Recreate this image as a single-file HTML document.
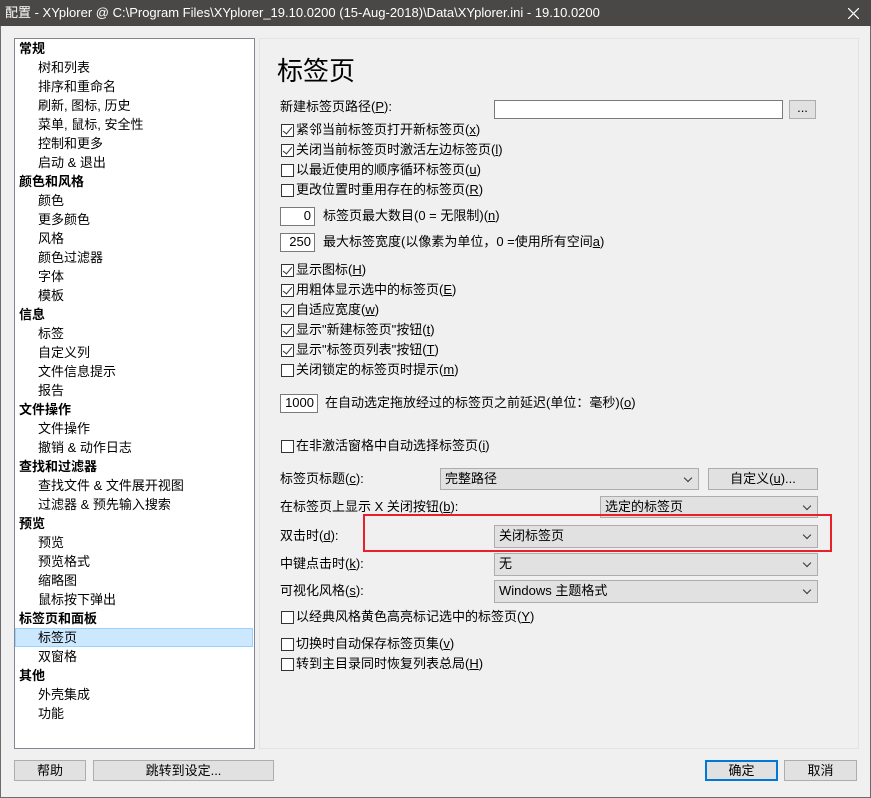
<!DOCTYPE html><html><head><meta charset="utf-8"><style>
*{margin:0;padding:0;box-sizing:border-box}
body{width:871px;height:798px;position:relative;background:#f0f0f0;font-family:"Liberation Sans","Noto Sans CJK SC",sans-serif;font-size:13px;color:#000;overflow:hidden}
.a{position:absolute;white-space:nowrap;line-height:18px}
.tb{position:absolute;left:0;top:0;width:871px;height:26px;background:#4a4846;color:#fff;font-size:13px;line-height:26px;padding-left:5px}
.win{position:absolute;left:0;top:26px;width:871px;height:772px;border:1px solid #6b6b6b;border-top:none}
.tree{position:absolute;left:14px;top:38px;width:241px;height:711px;background:#fff;border:1px solid #828790}
.pane{position:absolute;left:259px;top:38px;width:600px;height:711px;border:1px solid #e3e3e3;background:#f0f0f0}
.h{font-weight:bold;left:19px}
.c{left:38px}
.cb{position:absolute;width:13px;height:13px;border:1px solid #333;background:#fff}
.cb.k::after{content:"";position:absolute;left:3px;top:0px;width:4px;height:8px;border:solid #333;border-width:0 1.3px 1.3px 0;transform:rotate(40deg)}
.box{position:absolute;background:#fff;border:1px solid #7a7a7a;text-align:right;padding-right:3px;line-height:16px}
.cmb{position:absolute;background:#e1e1e1;border:1px solid #adadad;padding-left:4px;line-height:20px}
.cmb::after{content:"";position:absolute;right:7px;top:6px;width:5px;height:5px;border:solid #333;border-width:0 1px 1px 0;transform:rotate(45deg)}
.btn{position:absolute;background:#e1e1e1;border:1px solid #adadad;text-align:center;line-height:19px}
u{text-decoration:underline}
</style></head><body>
<div class="tb">配置 - XYplorer @ C:\Program Files\XYplorer_19.10.0200 (15-Aug-2018)\Data\XYplorer.ini - 19.10.0200<svg style="position:absolute;right:12px;top:8px" width="11" height="11"><path d="M0 0L11 11M11 0L0 11" stroke="#fff" stroke-width="1.2"/></svg></div>
<div class="win"></div>
<div class="tree"></div>
<div style="position:absolute;left:15px;top:628px;width:238px;height:19px;background:#cce8ff;border:1px solid #99d1ff"></div>
<div class="a h" style="top:40px">常规</div>
<div class="a c" style="top:59px">树和列表</div>
<div class="a c" style="top:78px">排序和重命名</div>
<div class="a c" style="top:97px">刷新, 图标, 历史</div>
<div class="a c" style="top:116px">菜单, 鼠标, 安全性</div>
<div class="a c" style="top:135px">控制和更多</div>
<div class="a c" style="top:154px">启动 &amp; 退出</div>
<div class="a h" style="top:173px">颜色和风格</div>
<div class="a c" style="top:192px">颜色</div>
<div class="a c" style="top:211px">更多颜色</div>
<div class="a c" style="top:230px">风格</div>
<div class="a c" style="top:249px">颜色过滤器</div>
<div class="a c" style="top:268px">字体</div>
<div class="a c" style="top:287px">模板</div>
<div class="a h" style="top:306px">信息</div>
<div class="a c" style="top:325px">标签</div>
<div class="a c" style="top:344px">自定义列</div>
<div class="a c" style="top:363px">文件信息提示</div>
<div class="a c" style="top:382px">报告</div>
<div class="a h" style="top:401px">文件操作</div>
<div class="a c" style="top:420px">文件操作</div>
<div class="a c" style="top:439px">撤销 &amp; 动作日志</div>
<div class="a h" style="top:458px">查找和过滤器</div>
<div class="a c" style="top:477px">查找文件 &amp; 文件展开视图</div>
<div class="a c" style="top:496px">过滤器 &amp; 预先输入搜索</div>
<div class="a h" style="top:515px">预览</div>
<div class="a c" style="top:534px">预览</div>
<div class="a c" style="top:553px">预览格式</div>
<div class="a c" style="top:572px">缩略图</div>
<div class="a c" style="top:591px">鼠标按下弹出</div>
<div class="a h" style="top:610px">标签页和面板</div>
<div class="a c" style="top:629px">标签页</div>
<div class="a c" style="top:648px">双窗格</div>
<div class="a h" style="top:667px">其他</div>
<div class="a c" style="top:686px">外壳集成</div>
<div class="a c" style="top:705px">功能</div>

<div class="pane"></div>
<div class="a" style="left:277px;top:54px;font-size:26px;line-height:34px">标签页</div>
<div class="a" style="left:280px;top:98px">新建标签页路径(<u>P</u>):</div>
<div class="box" style="left:494px;top:100px;width:289px;height:19px"></div>
<div class="btn" style="left:789px;top:100px;width:27px;height:19px;line-height:14px">...</div>

<div class="cb k" style="left:281px;top:124px"></div><div class="a" style="left:296px;top:121px">紧邻当前标签页打开新标签页(<u>x</u>)</div>
<div class="cb k" style="left:281px;top:144px"></div><div class="a" style="left:296px;top:141px">关闭当前标签页时激活左边标签页(<u>l</u>)</div>
<div class="cb" style="left:281px;top:164px"></div><div class="a" style="left:296px;top:161px">以最近使用的顺序循环标签页(<u>u</u>)</div>
<div class="cb" style="left:281px;top:184px"></div><div class="a" style="left:296px;top:181px">更改位置时重用存在的标签页(<u>R</u>)</div>
<div class="box" style="left:280px;top:207px;width:35px;height:19px">0</div><div class="a" style="left:323px;top:207px">标签页最大数目(0 = 无限制)(<u>n</u>)</div>
<div class="box" style="left:280px;top:233px;width:35px;height:19px">250</div><div class="a" style="left:323px;top:233px">最大标签宽度(以像素为单位，0 =使用所有空间<u>a</u>)</div>

<div class="cb k" style="left:281px;top:264px"></div><div class="a" style="left:296px;top:261px">显示图标(<u>H</u>)</div>
<div class="cb k" style="left:281px;top:284px"></div><div class="a" style="left:296px;top:281px">用粗体显示选中的标签页(<u>E</u>)</div>
<div class="cb k" style="left:281px;top:304px"></div><div class="a" style="left:296px;top:301px">自适应宽度(<u>w</u>)</div>
<div class="cb k" style="left:281px;top:324px"></div><div class="a" style="left:296px;top:321px">显示"新建标签页"按钮(<u>t</u>)</div>
<div class="cb k" style="left:281px;top:344px"></div><div class="a" style="left:296px;top:341px">显示"标签页列表"按钮(<u>T</u>)</div>
<div class="cb" style="left:281px;top:364px"></div><div class="a" style="left:296px;top:361px">关闭锁定的标签页时提示(<u>m</u>)</div>
<div class="box" style="left:280px;top:394px;width:38px;height:19px">1000</div><div class="a" style="left:325px;top:394px">在自动选定拖放经过的标签页之前延迟(单位：毫秒)(<u>o</u>)</div>
<div class="cb" style="left:281px;top:440px"></div><div class="a" style="left:296px;top:437px">在非激活窗格中自动选择标签页(<u>i</u>)</div>

<div class="a" style="left:280px;top:470px">标签页标题(<u>c</u>):</div>
<div class="cmb" style="left:440px;top:468px;width:259px;height:22px">完整路径</div>
<div class="btn" style="left:708px;top:468px;width:110px;height:22px;line-height:20px">自定义(<u>u</u>)...</div>
<div class="a" style="left:280px;top:498px">在标签页上显示 X 关闭按钮(<u>b</u>):</div>
<div class="cmb" style="left:600px;top:496px;width:218px;height:22px">选定的标签页</div>
<div class="a" style="left:280px;top:527px">双击时(<u>d</u>):</div>
<div class="cmb" style="left:494px;top:525px;width:324px;height:23px">关闭标签页</div>
<div class="a" style="left:280px;top:555px">中键点击时(<u>k</u>):</div>
<div class="cmb" style="left:494px;top:553px;width:324px;height:23px">无</div>
<div class="a" style="left:280px;top:582px">可视化风格(<u>s</u>):</div>
<div class="cmb" style="left:494px;top:580px;width:324px;height:23px">Windows 主题格式</div>
<div style="position:absolute;left:363px;top:514px;width:469px;height:38px;border:2px solid #e8202a"></div>

<div class="cb" style="left:281px;top:611px"></div><div class="a" style="left:296px;top:608px">以经典风格黄色高亮标记选中的标签页(<u>Y</u>)</div>
<div class="cb" style="left:281px;top:638px"></div><div class="a" style="left:296px;top:635px">切换时自动保存标签页集(<u>v</u>)</div>
<div class="cb" style="left:281px;top:658px"></div><div class="a" style="left:296px;top:655px">转到主目录同时恢复列表总局(<u>H</u>)</div>

<div class="btn" style="left:14px;top:760px;width:72px;height:21px">帮助</div>
<div class="btn" style="left:93px;top:760px;width:181px;height:21px">跳转到设定...</div>
<div class="btn" style="left:705px;top:760px;width:73px;height:21px;border:2px solid #0078d7;line-height:17px">确定</div>
<div class="btn" style="left:784px;top:760px;width:73px;height:21px">取消</div>
</body></html>
